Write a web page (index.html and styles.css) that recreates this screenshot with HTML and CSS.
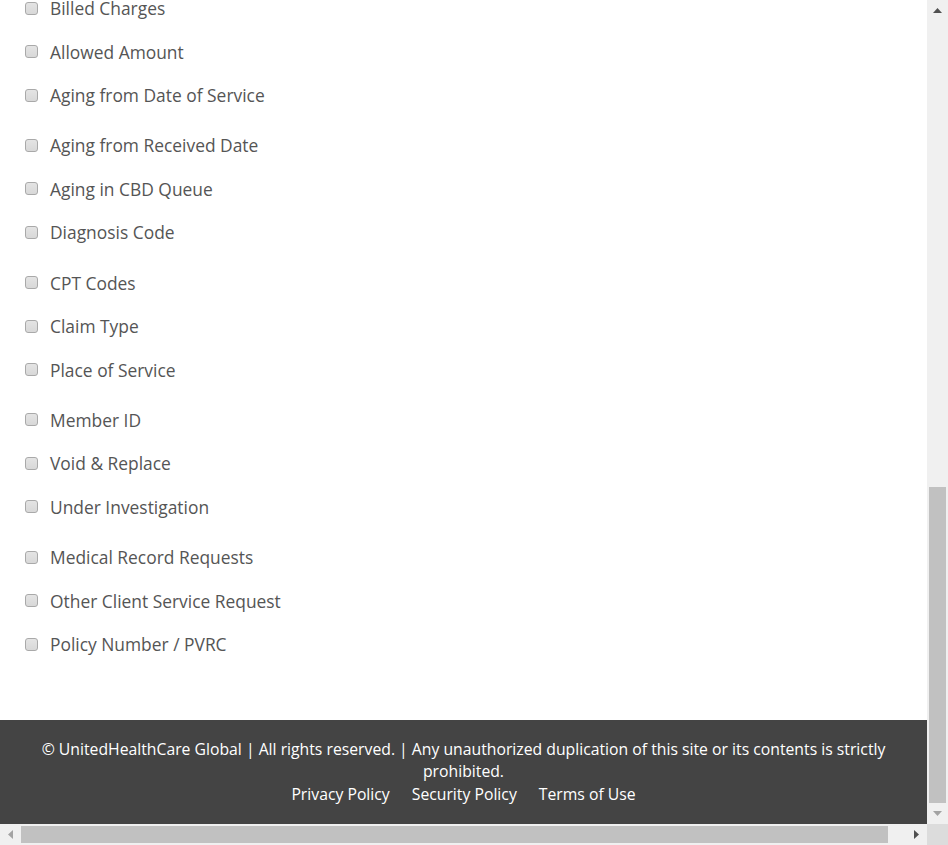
FILE: index.html
```html
<!DOCTYPE html>
<html lang="en">
<head>
<meta charset="utf-8">
<title>Report Columns</title>
<link rel="stylesheet" href="styles.css">
</head>
<body>
<div class="window">
  <div class="viewport">
    <div class="page">
      <div class="options">
        <div class="group">
          <label class="option"><span class="box"></span>Billed Charges</label>
          <label class="option"><span class="box"></span>Allowed Amount</label>
          <label class="option"><span class="box"></span>Aging from Date of Service</label>
        </div>
        <div class="group">
          <label class="option"><span class="box"></span>Aging from Received Date</label>
          <label class="option"><span class="box"></span>Aging in CBD Queue</label>
          <label class="option"><span class="box"></span>Diagnosis Code</label>
        </div>
        <div class="group">
          <label class="option"><span class="box"></span>CPT Codes</label>
          <label class="option"><span class="box"></span>Claim Type</label>
          <label class="option"><span class="box"></span>Place of Service</label>
        </div>
        <div class="group">
          <label class="option"><span class="box"></span>Member ID</label>
          <label class="option"><span class="box"></span>Void &amp; Replace</label>
          <label class="option"><span class="box"></span>Under Investigation</label>
        </div>
        <div class="group">
          <label class="option"><span class="box"></span>Medical Record Requests</label>
          <label class="option"><span class="box"></span>Other Client Service Request</label>
          <label class="option"><span class="box"></span>Policy Number / PVRC</label>
        </div>
      </div>
      <footer class="footer">
        <p class="copy">© UnitedHealthCare Global | All rights reserved. | Any unauthorized duplication of this site or its contents is strictly prohibited.</p>
        <nav class="links">
          <a href="#">Privacy Policy</a>
          <a href="#">Security Policy</a>
          <a href="#">Terms of Use</a>
        </nav>
      </footer>
    </div>
  </div>
  <div class="vscroll">
    <div class="btn"><svg width="9" height="5" viewBox="0 0 9 5"><polygon points="0,5 9,5 4.5,0" class="arrow-dark"/></svg></div>
    <div class="vtrack"><div class="vthumb"></div></div>
    <div class="btn"><svg width="9" height="5" viewBox="0 0 9 5"><polygon points="0,0 9,0 4.5,5" class="arrow-light"/></svg></div>
  </div>
  <div class="hscroll">
    <div class="btn"><svg width="5" height="9" viewBox="0 0 5 9"><polygon points="5,0 5,9 0,4.5" class="arrow-light"/></svg></div>
    <div class="htrack"><div class="hthumb"></div></div>
    <div class="btn"><svg width="5" height="9" viewBox="0 0 5 9"><polygon points="0,0 0,9 5,4.5" class="arrow-dark"/></svg></div>
  </div>
  <div class="corner"></div>
</div>
</body>
</html>
```

FILE: styles.css
```css
html, body {
  margin: 0;
  padding: 0;
  overflow: hidden;
  background: #fff;
}

.window {
  display: grid;
  grid-template-columns: 927px 21px;
  grid-template-rows: 824px 21px;
  width: 948px;
  height: 845px;
}

.viewport {
  overflow: hidden;
  background: #fff;
}

.page {
  display: flex;
  flex-direction: column;
}

.options {
  margin-top: -13.75px;
  padding-left: 25px;
  display: flex;
  flex-direction: column;
  gap: 6.8px;
}

.group {
  display: flex;
  flex-direction: column;
}

.option {
  display: flex;
  align-items: center;
  height: 43.5px;
  font-family: "Open Sans", "DejaVu Sans", sans-serif;
  font-size: 17.4px;
  color: #555;
}

.box {
  width: 11px;
  height: 11px;
  border: 1px solid #a9a9a9;
  border-radius: 3px;
  background: linear-gradient(#e4e4e4, #d8d8d8);
  margin-right: 12px;
  flex: none;
}

.footer {
  margin-top: 54px;
  background: #444;
  color: #fff;
  font-family: "Open Sans", "DejaVu Sans", sans-serif;
  font-size: 15.75px;
  line-height: 22.5px;
  text-align: center;
  padding: 18px 15px 22px;
}

.copy {
  margin: 0;
}

.links {
  display: flex;
  justify-content: center;
  gap: 22px;
}

.links a {
  color: #fff;
  text-decoration: none;
}

.vscroll {
  background: #f0f0f0;
  display: flex;
  flex-direction: column;
}

.hscroll {
  background: #f0f0f0;
  display: flex;
}

.btn {
  width: 21px;
  height: 21px;
  flex: none;
  display: flex;
  align-items: center;
  justify-content: center;
}

.vtrack {
  flex: 1;
  display: flex;
  flex-direction: column;
  justify-content: flex-end;
}

.vthumb {
  height: 316px;
  margin: 0 2px;
  background: #c1c1c1;
}

.htrack {
  flex: 1;
  display: flex;
  align-items: center;
}

.hthumb {
  width: 867px;
  height: 17px;
  background: #c1c1c1;
}

.corner {
  background: #dcdcdc;
}

.arrow-dark {
  fill: #505050;
}

.arrow-light {
  fill: #a3a3a3;
}
```
